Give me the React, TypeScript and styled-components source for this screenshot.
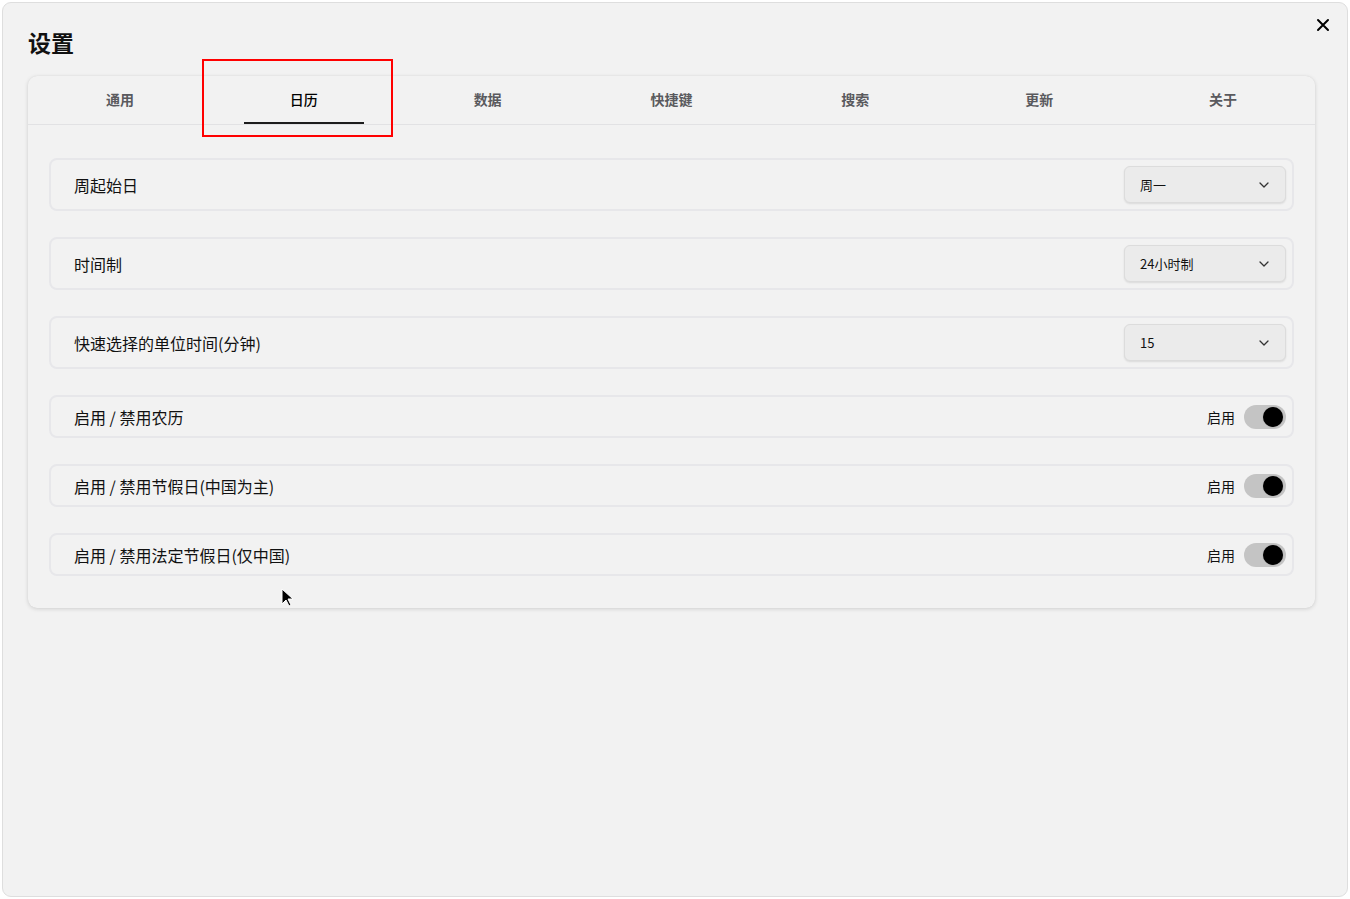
import React from "react";
import styled, { createGlobalStyle } from "styled-components";

const Global = createGlobalStyle`
  html, body { margin: 0; padding: 0; background: #ffffff; }
  body { font-family: "Noto Sans CJK SC", "Noto Sans", sans-serif; }
  * { box-sizing: border-box; }
`;

const Page = styled.div`
  width: 1350px;
  height: 899px;
  padding: 2px;
`;

const Window = styled.div`
  position: relative;
  width: 1346px;
  height: 895px;
  background: #f2f2f2;
  border: 1px solid #dedede;
  border-radius: 9px;
  padding: 21px 32px 0 25px;
`;

const Header = styled.div`
  display: flex;
  align-items: center;
  height: 36px;
  margin-bottom: 16px;
`;

const Title = styled.h1`
  margin: 0;
  font-size: 23px;
  font-weight: 700;
  color: #111;
  line-height: 36px;
`;

const Close = styled.button`
  position: absolute;
  top: 11px;
  right: 13px;
  width: 22px;
  height: 22px;
  border: none;
  background: transparent;
  padding: 0;
  display: flex;
  align-items: center;
  justify-content: center;
`;

const Card = styled.div`
  width: 1287px;
  background: #f2f2f2;
  border-radius: 9px;
  box-shadow: 0 1px 4px rgba(0, 0, 0, 0.14), 0 0 1px rgba(0, 0, 0, 0.08);
  padding-bottom: 32px;
`;

const Tabs = styled.div`
  display: grid;
  grid-template-columns: repeat(7, 1fr);
  height: 49px;
  border-bottom: 1px solid #e2e2e4;
`;

const Tab = styled.div<{ $active?: boolean }>`
  position: relative;
  display: flex;
  align-items: center;
  justify-content: center;
  font-size: 14px;
  font-weight: ${(p) => (p.$active ? 500 : 600)};
  color: ${(p) => (p.$active ? "#000" : "#5a5a5e")};
  padding-bottom: 2px;
  &::after {
    content: "";
    display: ${(p) => (p.$active ? "block" : "none")};
    position: absolute;
    bottom: 0px;
    left: 50%;
    width: 120px;
    margin-left: -60px;
    height: 2px;
    background: #1c1c1c;
  }
`;

const Body = styled.div`
  display: flex;
  flex-direction: column;
  gap: 26px;
  padding: 33px 21px 0 21px;
`;

const Row = styled.div<{ $tall?: boolean }>`
  display: flex;
  align-items: center;
  justify-content: space-between;
  height: ${(p) => (p.$tall ? "53px" : "43px")};
  border: 2px solid #e7e7ea;
  border-radius: 8px;
  padding: 0 6px 0 23px;
`;

const Label = styled.span`
  font-size: 16px;
  color: #111;
`;

const Select = styled.div`
  width: 162px;
  height: 37px;
  display: flex;
  align-items: center;
  justify-content: space-between;
  padding: 0 16px 0 15px;
  background: #ebebeb;
  border: 1px solid #dcdcdc;
  border-radius: 6px;
  box-shadow: 0 1px 2px rgba(0, 0, 0, 0.1);
  font-size: 13px;
  color: #111;
`;

const ToggleWrap = styled.div`
  display: flex;
  align-items: center;
  gap: 9px;
  font-size: 14px;
  color: #111;
`;

const Track = styled.div`
  width: 42px;
  height: 24px;
  border-radius: 12px;
  background: #c4c4c4;
  display: flex;
  align-items: center;
  justify-content: flex-end;
  padding-right: 3px;
`;

const Knob = styled.div`
  width: 20px;
  height: 20px;
  border-radius: 50%;
  background: #000;
  box-shadow: 0 0 1px rgba(0, 0, 0, 0.4);
`;

const Highlight = styled.div`
  position: absolute;
  left: 199px;
  top: 56px;
  width: 191px;
  height: 78px;
  border: 2px solid #ff0000;
  pointer-events: none;
`;

const Cursor = styled.svg`
  position: absolute;
  left: 278px;
  top: 585px;
`;

const Chevron = () => (
  <svg width="10" height="6" viewBox="0 0 10 6" fill="none">
    <path d="M1 1l4 4 4-4" stroke="#333" strokeWidth="1.3" strokeLinecap="round" strokeLinejoin="round" />
  </svg>
);

const tabs = ["通用", "日历", "数据", "快捷键", "搜索", "更新", "关于"];

const selects = [
  { label: "周起始日", value: "周一" },
  { label: "时间制", value: "24小时制" },
  { label: "快速选择的单位时间(分钟)", value: "15" },
];

const toggles = [
  "启用 / 禁用农历",
  "启用 / 禁用节假日(中国为主)",
  "启用 / 禁用法定节假日(仅中国)",
];

export default function App() {
  return (
    <Page>
      <Global />
      <Window>
        <Header>
          <Title>设置</Title>
        </Header>
        <Close aria-label="close">
          <svg width="14" height="14" viewBox="0 0 14 14">
            <path d="M2 2l10 10M12 2L2 12" stroke="#000" strokeWidth="2" strokeLinecap="round" />
          </svg>
        </Close>
        <Card>
          <Tabs>
            {tabs.map((t, i) => (
              <Tab key={t} $active={i === 1}>
                {t}
              </Tab>
            ))}
          </Tabs>
          <Body>
            {selects.map((s) => (
              <Row key={s.label} $tall>
                <Label>{s.label}</Label>
                <Select>
                  <span>{s.value}</span>
                  <Chevron />
                </Select>
              </Row>
            ))}
            {toggles.map((t) => (
              <Row key={t}>
                <Label>{t}</Label>
                <ToggleWrap>
                  <span>启用</span>
                  <Track>
                    <Knob />
                  </Track>
                </ToggleWrap>
              </Row>
            ))}
          </Body>
        </Card>
        <Highlight />
        <Cursor width="14" height="20" viewBox="0 0 14 20">
          <path d="M1 1v15l4-4 3 6 2-1-3-6h5z" fill="#000" stroke="#fff" strokeWidth="1" />
        </Cursor>
      </Window>
    </Page>
  );
}
